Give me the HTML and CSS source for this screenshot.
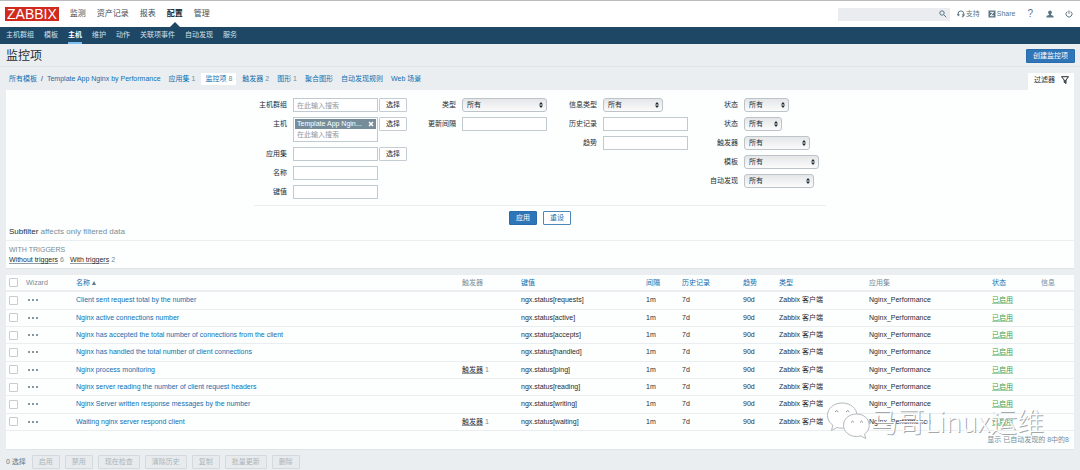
FILE: index.html
```html
<!DOCTYPE html>
<html lang="zh-CN">
<head>
<meta charset="utf-8">
<meta name="viewport" content="width=device-width, initial-scale=1">
<title>监控项</title>
<link rel="stylesheet" href="styles.css">
</head>
<body>
<header class="top">
  <a class="logo" href="#">ZABBIX</a>
  <nav class="main-nav">
    <a href="#">监测</a>
    <a href="#">资产记录</a>
    <a href="#">报表</a>
    <a href="#" class="selected">配置</a>
    <a href="#">管理</a>
  </nav>
  <div class="tools">
    <form class="search">
      <input type="text" aria-label="搜索">
      <button type="button" aria-label="搜索"><svg viewBox="0 0 8 8" width="8" height="8"><circle cx="3" cy="3" r="2.2"/><path d="M4.7 4.7L7.3 7.3"/></svg></button>
    </form>
    <a class="support" href="#"><svg viewBox="0 0 8 8" width="8" height="8"><path d="M1 5V3.8a2.9 2.9 0 0 1 5.8 0V5.4q0 1.6-2 1.6M1 4v1.7h.9V4zM6.8 4v1.7h-.9V4z"/></svg>支持</a>
    <a class="share" href="#"><svg viewBox="0 0 8 8" width="8" height="8"><rect class="solid" x=".5" y=".5" width="7" height="7"/><path class="light" d="M2.3 2.3h3.2L2.3 5.7h3.4"/></svg>Share</a>
    <a class="help" href="#" aria-label="帮助">?</a>
    <a class="user" href="#" aria-label="用户"><svg viewBox="0 0 8 8" width="8" height="8"><circle class="solid" cx="4" cy="2.4" r="1.9"/><path class="solid" d="M.5 7.5V6q.6-.9 2.5-1.100V4h2v.900Q6.900 5.100 7.500 6v1.500z"/></svg></a>
    <a class="power" href="#" aria-label="退出"><svg viewBox="0 0 8 8" width="8" height="8"><path d="M2.200 1.600a3 3 0 1 0 3.600 0M4 .5v3.300"/></svg></a>
  </div>
</header>
<nav class="sub-nav">
  <a href="#">主机群组</a>
  <a href="#">模板</a>
  <a href="#" class="selected">主机</a>
  <a href="#">维护</a>
  <a href="#">动作</a>
  <a href="#">关联项事件</a>
  <a href="#">自动发现</a>
  <a href="#">服务</a>
</nav>
<div class="title-row">
  <h1>监控项</h1>
  <button type="button" class="btn primary create">创建监控项</button>
</div>
<main>
  <div class="tabs-row">
    <nav class="object-tabs">
      <span class="crumbs"><a href="#">所有模板</a><span>/</span><a href="#">Template App Nginx by Performance</a></span>
      <span><a href="#">应用集</a> <small>1</small></span>
      <span class="current"><a href="#">监控项</a> <small>8</small></span>
      <span><a href="#">触发器</a> <small>2</small></span>
      <span><a href="#">图形</a> <small>1</small></span>
      <span><a href="#">聚合图形</a></span>
      <span><a href="#">自动发现规则</a></span>
      <span><a href="#">Web 场景</a></span>
    </nav>
    <button type="button" class="filter-tab">过滤器<svg viewBox="0 0 8 8" width="8" height="8"><path d="M.5.700h7L5 4v3.500L3.200 6.200V4z"/><path d="M4.100 4v2.600"/></svg></button>
  </div>
  <section class="filter">
    <form>
      <div class="fields">
        <div class="column">
          <label for="groups">主机群组</label>
          <div class="pick"><input id="groups" type="text" placeholder="在此输入搜索"><button type="button" class="btn">选择</button></div>
          <label for="hosts">主机</label>
          <div class="pick">
            <div class="multi">
              <span class="chip"><span>Template App Ngin...</span><button type="button" aria-label="移除"><svg viewBox="0 0 6 6" width="6" height="6"><path d="M1 1l4 4M5 1L1 5"/></svg></button></span>
              <input id="hosts" type="text" placeholder="在此输入搜索">
            </div>
            <button type="button" class="btn">选择</button>
          </div>
          <label for="app">应用集</label>
          <div class="pick"><input id="app" type="text"><button type="button" class="btn">选择</button></div>
          <label for="name">名称</label>
          <div class="pick"><input id="name" type="text"></div>
          <label for="key">键值</label>
          <div class="pick"><input id="key" type="text"></div>
        </div>
        <div class="column">
          <label for="type">类型</label>
          <select id="type" class="w-full"><option>所有</option></select>
          <label for="delay">更新间隔</label>
          <input id="delay" type="text">
        </div>
        <div class="column">
          <label for="info">信息类型</label>
          <select id="info" class="w-info"><option>所有</option></select>
          <label for="history">历史记录</label>
          <input id="history" type="text">
          <label for="trends">趋势</label>
          <input id="trends" type="text">
        </div>
        <div class="column">
          <label for="state">状态</label>
          <select id="state" class="w-state"><option>所有</option></select>
          <label for="status">状态</label>
          <select id="status" class="w-status"><option>所有</option></select>
          <label for="trig">触发器</label>
          <select id="trig" class="w-trig"><option>所有</option></select>
          <label for="tpl">模板</label>
          <select id="tpl" class="w-tpl"><option>所有</option></select>
          <label for="disc">自动发现</label>
          <select id="disc" class="w-disc"><option>所有</option></select>
        </div>
      </div>
      <div class="actions">
        <button type="button" class="btn primary">应用</button>
        <button type="button" class="btn outline">重设</button>
      </div>
    </form>
    <p class="subfilter"><b>Subfilter</b> affects only filtered data</p>
    <div class="with-triggers">
      <h2>WITH TRIGGERS</h2>
      <p><span><a href="#">Without triggers</a> <small>6</small></span><span><a href="#">With triggers</a> <small>2</small></span></p>
    </div>
  </section>
  <section class="items">
    <table>
      <colgroup><col class="c-check"><col class="c-wizard"><col><col class="c-trig"><col class="c-key"><col class="c-delay"><col class="c-history"><col class="c-trends"><col class="c-type"><col class="c-app"><col class="c-status"><col class="c-info"></colgroup>
      <thead>
        <tr><th><input type="checkbox" aria-label="全选"></th><th>Wizard</th><th><a href="#">名称 <i></i></a></th><th>触发器</th><th><a href="#">键值</a></th><th><a href="#">间隔</a></th><th><a href="#">历史记录</a></th><th><a href="#">趋势</a></th><th><a href="#">类型</a></th><th>应用集</th><th><a href="#">状态</a></th><th>信息</th></tr>
      </thead>
      <tbody>
        <tr><td><input type="checkbox" aria-label="选择"></td><td><button type="button" class="dots" aria-label="菜单"></button></td><td><a href="#">Client sent request total by the number</a></td><td></td><td>ngx.status[requests]</td><td>1m</td><td>7d</td><td>90d</td><td>Zabbix 客户端</td><td>Nginx_Performance</td><td><a href="#" class="on">已启用</a></td><td></td></tr>
        <tr><td><input type="checkbox" aria-label="选择"></td><td><button type="button" class="dots" aria-label="菜单"></button></td><td><a href="#">Nginx active connections number</a></td><td></td><td>ngx.status[active]</td><td>1m</td><td>7d</td><td>90d</td><td>Zabbix 客户端</td><td>Nginx_Performance</td><td><a href="#" class="on">已启用</a></td><td></td></tr>
        <tr><td><input type="checkbox" aria-label="选择"></td><td><button type="button" class="dots" aria-label="菜单"></button></td><td><a href="#">Nginx has accepted the total number of connections from the client</a></td><td></td><td>ngx.status[accepts]</td><td>1m</td><td>7d</td><td>90d</td><td>Zabbix 客户端</td><td>Nginx_Performance</td><td><a href="#" class="on">已启用</a></td><td></td></tr>
        <tr><td><input type="checkbox" aria-label="选择"></td><td><button type="button" class="dots" aria-label="菜单"></button></td><td><a href="#">Nginx has handled the total number of client connections</a></td><td></td><td>ngx.status[handled]</td><td>1m</td><td>7d</td><td>90d</td><td>Zabbix 客户端</td><td>Nginx_Performance</td><td><a href="#" class="on">已启用</a></td><td></td></tr>
        <tr><td><input type="checkbox" aria-label="选择"></td><td><button type="button" class="dots" aria-label="菜单"></button></td><td><a href="#">Nginx process monitoring</a></td><td><a href="#" class="dark">触发器</a> <small>1</small></td><td>ngx.status[ping]</td><td>1m</td><td>7d</td><td>90d</td><td>Zabbix 客户端</td><td>Nginx_Performance</td><td><a href="#" class="on">已启用</a></td><td></td></tr>
        <tr><td><input type="checkbox" aria-label="选择"></td><td><button type="button" class="dots" aria-label="菜单"></button></td><td><a href="#">Nginx server reading the number of client request headers</a></td><td></td><td>ngx.status[reading]</td><td>1m</td><td>7d</td><td>90d</td><td>Zabbix 客户端</td><td>Nginx_Performance</td><td><a href="#" class="on">已启用</a></td><td></td></tr>
        <tr><td><input type="checkbox" aria-label="选择"></td><td><button type="button" class="dots" aria-label="菜单"></button></td><td><a href="#">Nginx Server written response messages by the number</a></td><td></td><td>ngx.status[writing]</td><td>1m</td><td>7d</td><td>90d</td><td>Zabbix 客户端</td><td>Nginx_Performance</td><td><a href="#" class="on">已启用</a></td><td></td></tr>
        <tr><td><input type="checkbox" aria-label="选择"></td><td><button type="button" class="dots" aria-label="菜单"></button></td><td><a href="#">Waiting nginx server respond client</a></td><td><a href="#" class="dark">触发器</a> <small>1</small></td><td>ngx.status[waiting]</td><td>1m</td><td>7d</td><td>90d</td><td>Zabbix 客户端</td><td>Nginx_Performance</td><td><a href="#" class="on">已启用</a></td><td></td></tr>
      </tbody>
    </table>
    <p class="stats">显示 已自动发现的 8中的8</p>
    <div class="watermark">
      <svg viewBox="0 0 44 40" width="44" height="40">
        <path class="edge" d="M16 2C7.500 2 1.500 7.500 1.500 14.500c0 4 2 7.300 5.300 9.600L5.500 29.500l5.600-3q2.400.7 5.400.7c8.300-.2 14.500-5.700 14.500-12.700S24.500 2 16 2z"/>
        <path class="edge" d="M30.500 13C23 13 17.500 18 17.500 24.200S23 35.500 30.500 35.500q2.300 0 4.400-.6l4.900 2.700-1.300-4.400c3-2.200 4.700-5.200 4.700-8.900C43.200 18 38 13 30.500 13z"/>
        <path class="eye" d="M9 11q1.700-3 3.400 0M20 11q1.700-3 3.400 0M25 21.500q1.500-2.800 3 0M34 21.500q1.500-2.800 3 0"/>
      </svg>
      <span>马哥Linux运维</span>
    </div>
  </section>
  <div class="bulk">
    <span>0 选择</span>
    <button type="button" class="btn" disabled>启用</button>
    <button type="button" class="btn" disabled>禁用</button>
    <button type="button" class="btn" disabled>现在检查</button>
    <button type="button" class="btn" disabled>清除历史</button>
    <button type="button" class="btn" disabled>复制</button>
    <button type="button" class="btn" disabled>批量更新</button>
    <button type="button" class="btn" disabled>删除</button>
  </div>
</main>
</body>
</html>
```
FILE: styles.css
```css
* { box-sizing: border-box; }

body {
  margin: 0;
  background: #ebeef0;
  color: #1f2c33;
  font: 7px/10px "Liberation Sans", "Noto Sans CJK SC", sans-serif;
}

a { color: #0f6fb0; text-decoration: none; }
p, h1, h2 { margin: 0; }
small { font-size: 7px; color: #768d99; }
input, select, button { margin: 0; font: inherit; color: inherit; }
button { padding: 0; border: 0; background: none; }
svg { display: block; fill: none; stroke: #5d7685; }

/* Header */
.top {
  display: flex;
  align-items: center;
  height: 27px;
  padding: 0 7px 0 5px;
  border-top: 1px solid #b9bcbe;
  background: #fff;
}
.logo {
  padding: 0 2px;
  background: #d02a1e;
  color: #fff;
  font-size: 14px;
  line-height: 14px;
}
.main-nav { display: flex; gap: 11px; margin-left: 11px; font-size: 8px; line-height: 26px; }
.main-nav a { position: relative; color: #3c4d57; }
.main-nav .selected { color: #1f2c33; font-weight: bold; }
.main-nav .selected::after {
  content: "";
  position: absolute;
  left: 50%;
  bottom: 0;
  border: 5px solid transparent;
  border-top: 0;
  border-bottom-color: #1d4765;
  transform: translateX(-50%);
}
.tools { display: flex; align-items: center; margin-left: auto; }
.tools a { display: flex; align-items: center; gap: 1px; color: #5d7685; }
.tools .solid { fill: #5d7685; stroke: none; }
.tools .light { stroke: #fff; }
.search { display: flex; align-items: center; width: 112px; height: 13px; padding-right: 3px; background: #ebecef; }
.search input { flex: 1; min-width: 0; height: 13px; border: 0; background: none; }
.support { margin-left: 7px; }
.share { margin-left: 8px; }
.tools .help { margin-left: 12px; font-size: 10px; }
.user { margin-left: 13px; }
.power { margin-left: 11px; }

.sub-nav { display: flex; gap: 10px; height: 17px; padding-left: 6px; background: #1d4765; line-height: 16px; }
.sub-nav a { color: #d5e0e8; }
.sub-nav .selected { color: #fff; font-weight: bold; border-bottom: 2px solid #7cbff2; }

/* Title */
.title-row {
  display: flex;
  align-items: center;
  justify-content: space-between;
  height: 23px;
  padding: 2px 5px 0 6px;
  border-bottom: 1px solid #dfe4e7;
}
.title-row h1 { font-size: 12px; font-weight: normal; line-height: 18px; }

.btn {
  height: 14px;
  padding: 0 6px;
  border: 1px solid #c3cdd3;
  border-radius: 1px;
  background: #fff;
  line-height: 12px;
  white-space: nowrap;
}
.btn.primary { border-color: #2a6cab; background: #2f76b8; color: #fff; }
.btn.outline { border-color: #4a88b8; color: #0f6fb0; }

main { padding: 0 6px; }

/* Tabs */
.tabs-row { display: flex; align-items: flex-end; justify-content: space-between; height: 23px; }
.object-tabs { display: flex; align-items: center; gap: 4px; padding: 0 3px 5px; line-height: 12px; }
.object-tabs > span { padding: 0 2px; }
.object-tabs .crumbs { display: flex; gap: 4px; padding: 0 2px 0 0; }
.object-tabs .current { padding: 0 4px; background: #fff; }
.filter-tab { display: flex; align-items: center; gap: 6px; height: 17px; padding: 0 5px 3px 6px; background: #fdfefe; }
.filter-tab svg { stroke: #1f2c33; }

/* Filter */
.filter { background: #fdfefe; border-bottom: 1px solid #dfe4e7; }
.filter form { width: fit-content; margin: 0 auto; padding-top: 8px; }
.fields { display: flex; padding-bottom: 6px; border-bottom: 1px solid #ebeef0; }
.column {
  display: grid;
  grid-template-columns: 50px 85px;
  grid-auto-rows: max-content;
  column-gap: 6px;
  row-gap: 5px;
}
.column:first-child { grid-template-columns: 33px 114px; }
.column:nth-child(2) { grid-template-columns: 49px 85px; }
.column:last-child { grid-template-columns: 50px 82px; }
.column > label { line-height: 14px; text-align: right; white-space: nowrap; }
.fields input { width: 85px; height: 14px; padding: 0 3px; border: 1px solid #bfcad1; background: #fff; }
.fields input::placeholder { color: #8d9aa2; opacity: 1; }
.pick { display: flex; align-items: flex-start; gap: 1px; }
.multi { width: 85px; height: 25px; padding: 1px; border: 1px solid #bfcad1; background: #fff; }
.fields .multi input { display: block; width: 100%; height: 11px; padding: 0 2px; border: 0; }
.chip { display: flex; align-items: center; justify-content: space-between; height: 10px; padding: 0 2px; background: #768d99; color: #fff; white-space: nowrap; }
.chip svg { stroke: #fff; stroke-width: 1.5; }
select {
  appearance: none;
  height: 14px;
  padding: 0 4px;
  border: 1px solid #bcc4ca;
  border-radius: 3px;
  background:
    url("data:image/svg+xml,%3Csvg xmlns='http://www.w3.org/2000/svg' viewBox='0 0 4 6'%3E%3Cpath fill='%231f2c33' d='M0 2.500L2 0l2 2.500zM0 3.500L2 6l2-2.500z'/%3E%3C/svg%3E") right 3px center / 4px 6px no-repeat,
    linear-gradient(#e4e6e8, #fbfbfb);
}
.w-full { width: 85px; }
.w-info { width: 60px; }
.w-state { width: 45px; }
.w-status { width: 38px; }
.w-trig { width: 66px; }
.w-tpl { width: 75px; }
.w-disc { width: 70px; }
.actions { display: flex; justify-content: center; gap: 6px; padding-top: 5px; }
.subfilter { padding: 1px 3px 2px; border-bottom: 1px solid #ebeef0; color: #768d99; font-size: 8px; line-height: 12px; }
.subfilter b { color: #1f2c33; font-weight: normal; }
.with-triggers { padding: 4px 3px; }
.with-triggers h2 { color: #768d99; font-size: 7px; font-weight: normal; }
.with-triggers p { display: flex; gap: 6px; line-height: 9px; }
.with-triggers a, .dark { color: #1f2c33; border-bottom: 1px solid #8f9ca4; }

/* Items */
.items { position: relative; margin-top: 6px; background: #fdfefe; border-bottom: 1px solid #dfe4e7; }
table { width: 100%; height: 156px; border-collapse: collapse; table-layout: fixed; }
th, td { padding: 0; border-bottom: 1px solid #ebeef0; text-align: left; vertical-align: middle; white-space: nowrap; }
th { height: 16px; border-bottom-width: 2px; color: #768d99; font-weight: normal; }
.c-check { width: 20px; }
.c-wizard { width: 50px; }
.c-trig { width: 59px; }
.c-key { width: 125px; }
.c-delay { width: 36px; }
.c-history { width: 61px; }
.c-trends { width: 36px; }
.c-type { width: 90px; }
.c-app { width: 123px; }
.c-status { width: 49px; }
.c-info { width: 33px; }
th i { display: inline-block; border: 2px solid transparent; border-top: 0; border-bottom: 4px solid #5d7685; }
table input {
  display: block;
  appearance: none;
  width: 9px;
  height: 9px;
  border: 1px solid #c3cdd3;
  border-radius: 1px;
  background: #fff;
}
table input[type="checkbox"] { margin: 0 0 0 3px; }
.dots { display: block; width: 10px; height: 2px; margin-left: 2px; background: repeating-linear-gradient(90deg, #8797a1 0 2px, transparent 2px 4px); }
.on { color: #429e47; border-bottom: 1px solid #a3cfa6; }
.stats { padding: 4px 5px; color: #768d99; text-align: right; }

.watermark {
  position: absolute;
  right: 30px;
  bottom: 8px;
  display: flex;
  align-items: center;
  gap: 1px;
  color: #fff;
  font: 300 27px/24px "Noto Sans CJK SC", sans-serif;
  text-shadow: 1px 1px 0 #a4a8aa;
  white-space: nowrap;
  pointer-events: none;
}
.watermark .edge { fill: #fff; stroke: #b4b8ba; }
.watermark .eye { stroke: #8c9092; }

/* Bulk actions */
.bulk { display: flex; align-items: center; gap: 5px; padding: 5px 0 1px; color: #5d7685; }
.bulk .btn { border-color: #d3dadd; background: #e8ebed; color: #a9b4ba; }
.bulk span { padding-right: 1px; }
```
